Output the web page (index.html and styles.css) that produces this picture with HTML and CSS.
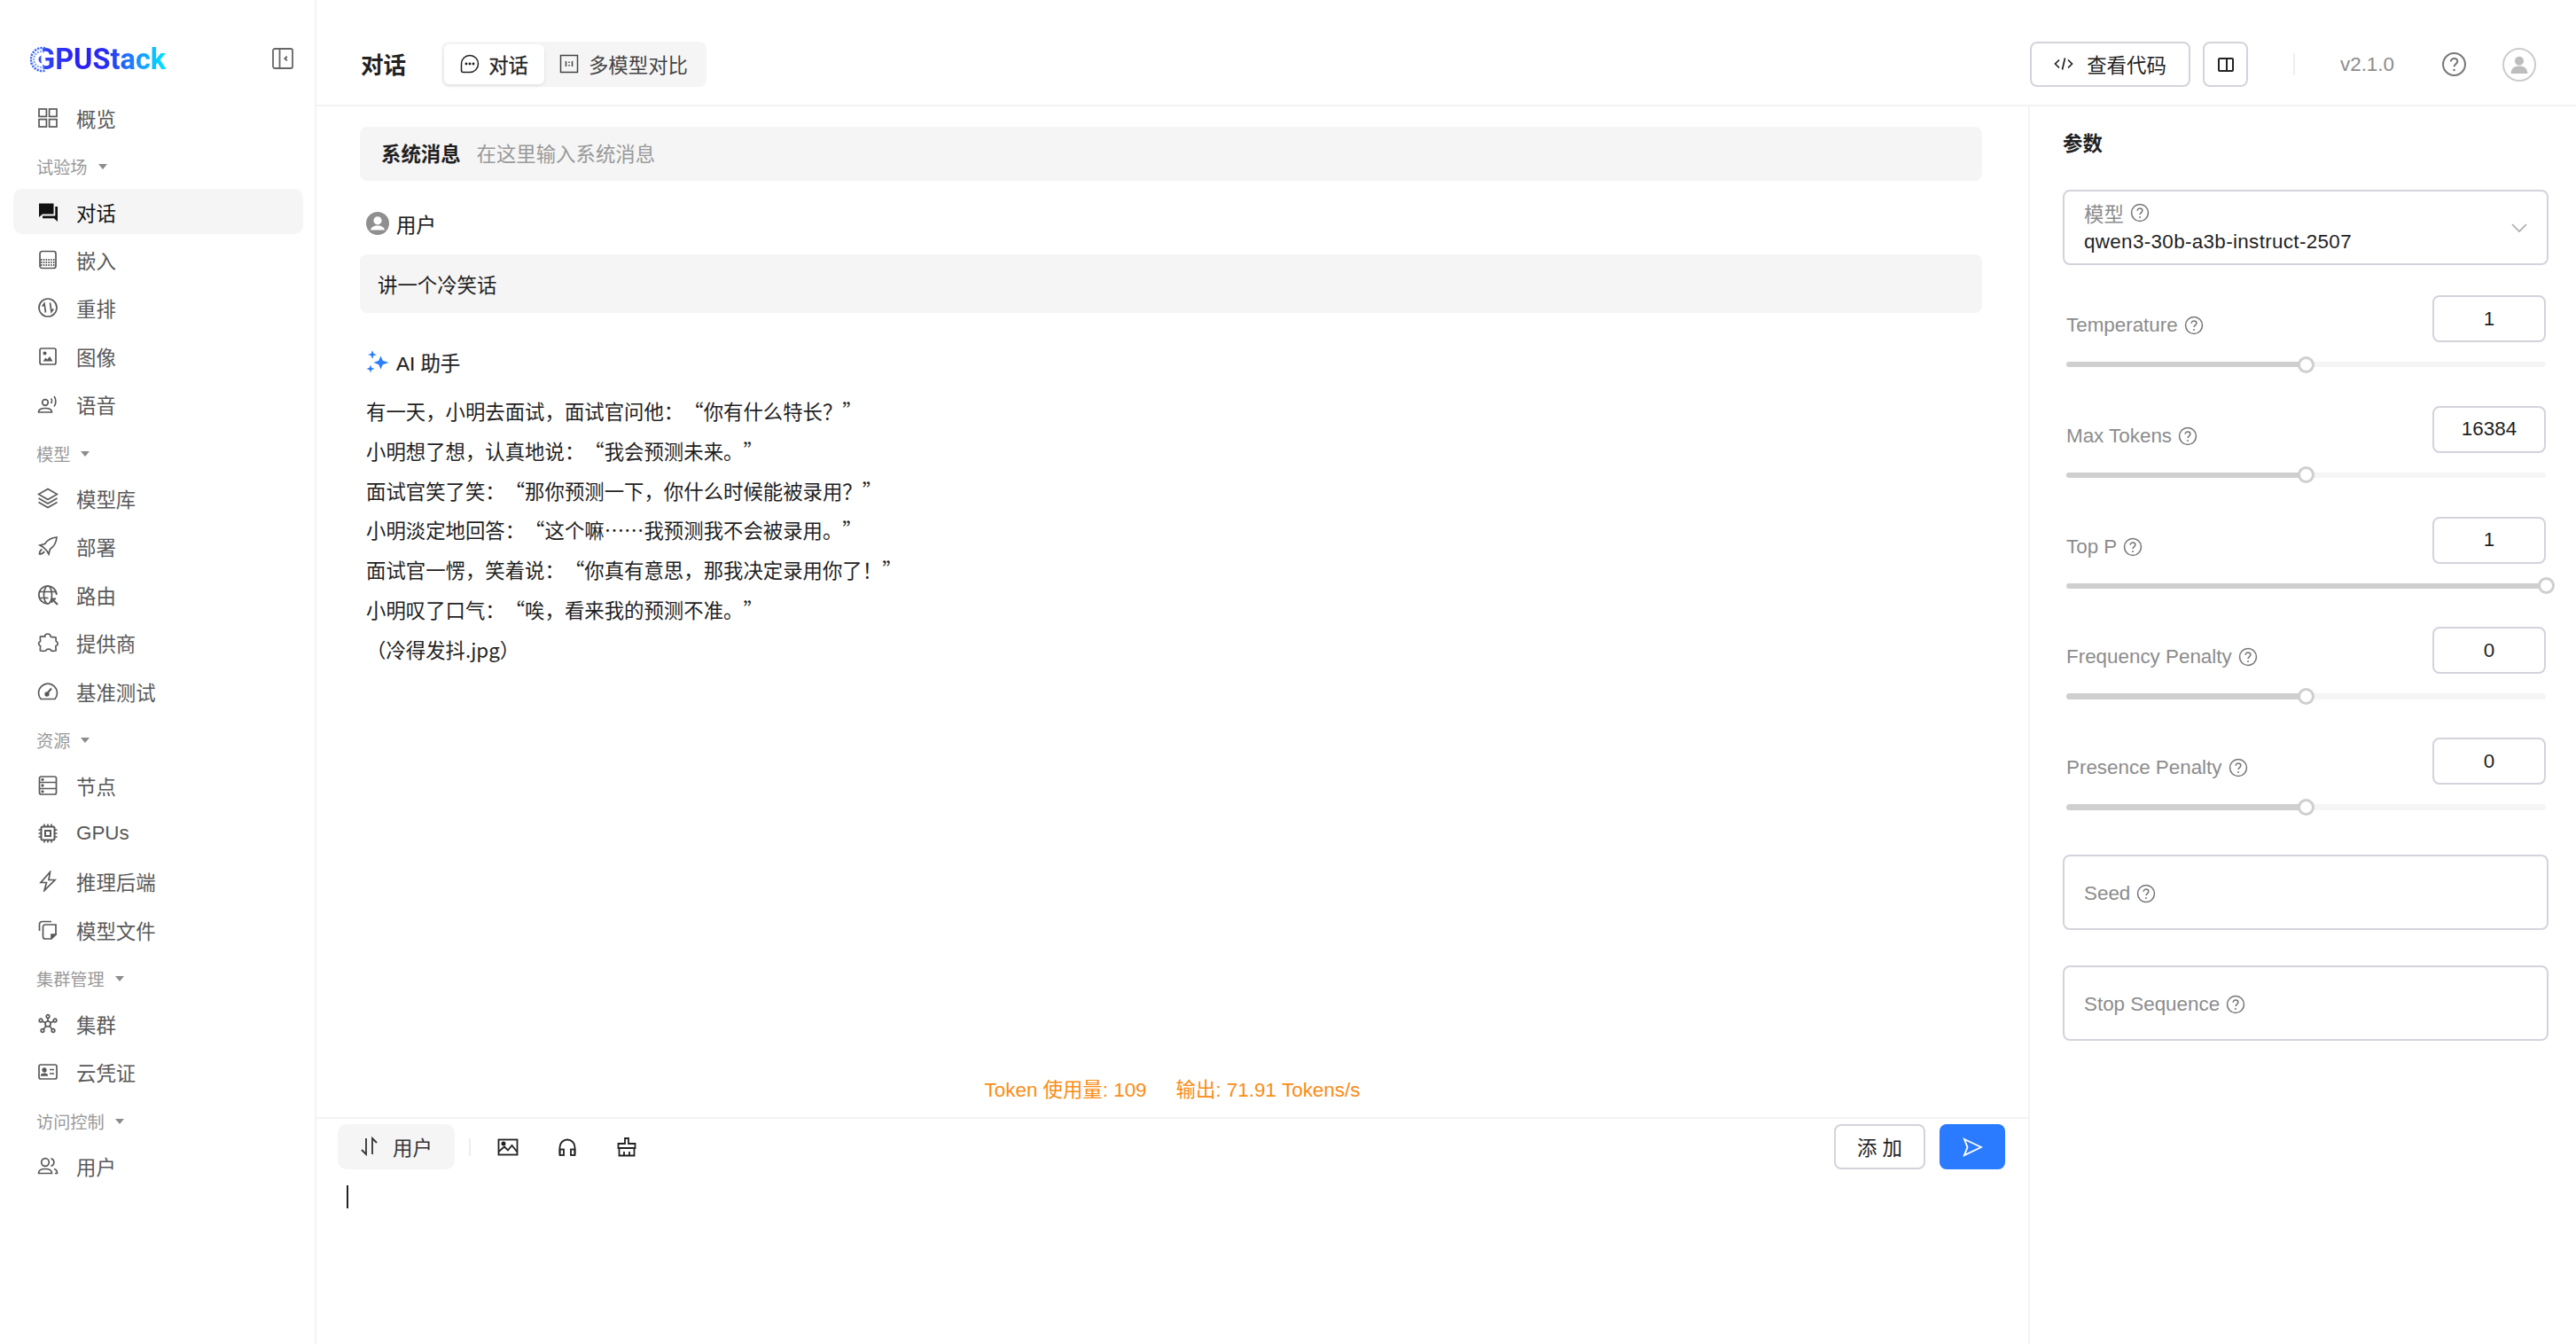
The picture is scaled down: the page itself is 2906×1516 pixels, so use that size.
FILE: index.html
```html
<!DOCTYPE html>
<html lang="zh-CN">
<head>
    <meta charset="UTF-8">
    <title>GPUStack</title>
    <link rel="stylesheet" href="styles.css">
</head>
<body>
    <svg class="sprite" width="0" height="0">
        <symbol id="hint" viewBox="0 0 20 20">
            <circle cx="10" cy="10" r="8.6" fill="none" stroke="currentColor" stroke-width="1.4"/>
            <path d="M7.4 8c0-1.6 1.2-2.5 2.6-2.5s2.6.9 2.6 2.3c0 2-2.6 2.1-2.6 4.1" fill="none" stroke="currentColor" stroke-width="1.4"/>
            <circle cx="10" cy="14.5" r=".9" fill="currentColor"/>
        </symbol>
    </svg>

    <aside class="sidebar">
        <div class="sidebar-head">
            <div class="logo">
                <span class="logo-text">GPUStack</span>
                <svg class="logo-ring" viewBox="0 0 30 30">
                    <path d="M14 5.500A9.500 9.500 0 0 0 14 24.500" fill="none" stroke="#fff" stroke-width="10"/>
                    <path d="M17 2.400A13 13 0 1 0 17 27.600" fill="none" stroke="#3f6bf5" stroke-width="2.600" stroke-dasharray="2.200 1.200"/>
                    <path d="M16 6.500A9 9 0 1 0 16 23.500" fill="none" stroke="#7c9bf9" stroke-width="2.200" stroke-dasharray="1.800 1.400"/>
                </svg>
            </div>
            <svg class="collapse-icon" viewBox="0 0 24 24">
                <rect x="1" y="1" width="22" height="22" rx="2"/>
                <path d="M8.500 1v22"/>
                <path d="M16.800 9.600 14.400 12l2.400 2.400" stroke-width="2"/>
            </svg>
        </div>

        <nav class="nav">
            <a class="nav-item">
                <svg class="nav-icon" viewBox="0 0 24 24"><rect x="2" y="2" width="8.400" height="8.400"/><rect x="13.600" y="2" width="8.400" height="8.400"/><rect x="2" y="13.600" width="8.400" height="8.400"/><rect x="13.600" y="13.600" width="8.400" height="8.400"/></svg>
                概览
            </a>

            <div class="nav-group">试验场<span class="caret"></span></div>
            <a class="nav-item active">
                <svg class="nav-icon solid" viewBox="0 0 24 24"><path d="M2 2.500h16.500v12H6l-4 3.500z"/><path d="M20.300 6H23v17l-4-3.800H6v-2.700h14.300z"/></svg>
                对话
            </a>
            <a class="nav-item">
                <svg class="nav-icon" viewBox="0 0 24 24"><rect x="3" y="2.500" width="18" height="19" rx="2.500"/><path d="M4 12h16M4 15h16M4 18h16" stroke-dasharray="1.500 1.300" stroke-width="2"/></svg>
                嵌入
            </a>
            <a class="nav-item">
                <svg class="nav-icon" viewBox="0 0 24 24"><circle cx="12" cy="12" r="10"/><path d="M9.500 17.500 8 7.500 5.800 10.500M14.500 6.500 16 16.500l2.200-3"/></svg>
                重排
            </a>
            <a class="nav-item">
                <svg class="nav-icon" viewBox="0 0 24 24"><rect x="3" y="3" width="18" height="18" rx="2"/><circle cx="8.500" cy="8.500" r="1.200" fill="currentColor"/><path d="M6.500 17.500l3-4 1.800 2 2.700-3.500 3.500 5.500z" fill="currentColor" stroke-width="0"/></svg>
                图像
            </a>
            <a class="nav-item">
                <svg class="nav-icon" viewBox="0 0 24 24"><circle cx="9" cy="10" r="3.300"/><path d="M1.500 21c0-3 3-4.500 7.500-4.500s7.500 1.500 7.500 4.500z"/><path d="M15.500 5.500c1.300 1.500 1.300 4 0 5.500M19 3c2.500 3 2.500 8.500 0 11.500"/></svg>
                语音
            </a>

            <div class="nav-group">模型<span class="caret"></span></div>
            <a class="nav-item">
                <svg class="nav-icon" viewBox="0 0 24 24"><path d="M12 1.500 22.500 7.500 12 13.500 1.500 7.500z"/><path d="M1.500 12 12 18l10.500-6M1.500 16.500 12 22.500l10.500-6"/></svg>
                模型库
            </a>
            <a class="nav-item">
                <svg class="nav-icon" viewBox="0 0 24 24"><path d="M22 2c-6 .5-10.500 3-13.500 7.500L3 11l3.500 2 4.500 4.500 2 3.500 1.500-5.500C19 12.500 21.500 8 22 2z"/><path d="M5.500 15.500c-2 1-3 3-3 5.500 2.500 0 4.500-1 5.500-3"/></svg>
                部署
            </a>
            <a class="nav-item">
                <svg class="nav-icon" viewBox="0 0 24 24"><path d="M21.800 12a10 10 0 1 0-9.800 10"/><ellipse cx="12" cy="12" rx="4.500" ry="10"/><path d="M2.500 8.500h19M2.500 15.500h10"/><path d="M23 23l-6-6M16.500 21v-4.500H21" stroke-width="2"/></svg>
                路由
            </a>
            <a class="nav-item">
                <svg class="nav-icon" viewBox="0 0 24 24"><path d="M8.500 5c0-4 6.500-4 6.500 0 0 1 4.500.5 6 1 .5 1.500-.5 4 .5 4.500 2.500 1.500 2 4.500-.5 5-.5 1 .5 3.500 0 5.500-2 .5-4 .5-5 0-1.500-2.500-5-2.500-6.500 0-1.500.5-4 .5-6 0-.5-2 .3-4.500 0-5.500-2.500-1-2.500-4 0-5 .3-1-.5-3.500 0-5.500 1.500-.5 5 .2 6 0z"/></svg>
                提供商
            </a>
            <a class="nav-item">
                <svg class="nav-icon" viewBox="0 0 24 24"><path d="M4 20.500a10.500 10.500 0 1 1 16 0z"/><path d="M11 14.500 16 8.500" stroke-width="2"/><circle cx="11" cy="15" r="1.800" fill="currentColor"/></svg>
                基准测试
            </a>

            <div class="nav-group">资源<span class="caret"></span></div>
            <a class="nav-item">
                <svg class="nav-icon" viewBox="0 0 24 24"><rect x="2.500" y="2" width="19" height="20" rx="2"/><path d="M2.500 8.500h19M2.500 15.500h19"/><circle cx="6" cy="5.300" r=".8" fill="currentColor"/><circle cx="6" cy="12" r=".8" fill="currentColor"/><circle cx="6" cy="18.800" r=".8" fill="currentColor"/></svg>
                节点
            </a>
            <a class="nav-item">
                <svg class="nav-icon" viewBox="0 0 24 24"><rect x="4.500" y="4.500" width="15" height="15" rx="1.500" stroke-width="2"/><rect x="9" y="9" width="6" height="6" stroke-width="2"/><path d="M8 1.500v3M12 1.500v3M16 1.500v3M8 19.500v3M12 19.500v3M16 19.500v3M1.500 8h3M1.500 12h3M1.500 16h3M19.500 8h3M19.500 12h3M19.500 16h3"/></svg>
                GPUs
            </a>
            <a class="nav-item">
                <svg class="nav-icon" viewBox="0 0 24 24"><path d="M14.500 1.500 4 13.500h6.500L8 22.500 20 10.500h-7z"/></svg>
                推理后端
            </a>
            <a class="nav-item">
                <svg class="nav-icon" viewBox="0 0 24 24"><path d="M2.500 13V5.500a3 3 0 0 1 3-3H16"/><path d="M9 6h12v11l-5 5H9a2.500 2.500 0 0 1-2.500-2.500v-11A2.500 2.500 0 0 1 9 6z"/><path d="M16 22v-5h6" fill="currentColor"/></svg>
                模型文件
            </a>

            <div class="nav-group">集群管理<span class="caret"></span></div>
            <a class="nav-item">
                <svg class="nav-icon" viewBox="0 0 24 24"><circle cx="12" cy="12" r="3"/><circle cx="12" cy="3.500" r="1.800"/><circle cx="4" cy="8" r="1.800"/><circle cx="20" cy="8" r="1.800"/><circle cx="6" cy="19.500" r="1.800"/><circle cx="18" cy="19.500" r="1.800"/><path d="M12 5.300V9M5.600 8.900 9.400 10.800M18.400 8.900 14.600 10.800M7 18 10.200 14.400M17 18 13.800 14.400"/></svg>
                集群
            </a>
            <a class="nav-item">
                <svg class="nav-icon" viewBox="0 0 24 24"><rect x="2" y="4" width="20" height="16" rx="2"/><circle cx="8" cy="10" r="1.800" fill="currentColor"/><path d="M4.800 16c.3-2.200 6.100-2.200 6.400 0z" fill="currentColor"/><path d="M14 9.500h5M14 14h5"/></svg>
                云凭证
            </a>

            <div class="nav-group">访问控制<span class="caret"></span></div>
            <a class="nav-item">
                <svg class="nav-icon" viewBox="0 0 24 24"><circle cx="9" cy="8" r="4.300"/><path d="M1.500 20.500c0-3.500 3-5 7.500-5s7.500 1.500 7.500 5z"/><path d="M15.500 3.800a4.300 4.300 0 0 1 0 8.400M19 15.500c2 .6 3.500 2.300 3.500 5H20"/></svg>
                用户
            </a>
        </nav>
    </aside>

    <div class="page">
        <header class="topbar">
            <h1 class="page-title">对话</h1>
            <div class="tabs">
                <div class="tab active">
                    <svg class="tab-icon" viewBox="0 0 22 22"><path d="M11 1.500a9.500 9.500 0 0 1 0 19H3.500c-1 0-2-1-2-2V11A9.500 9.500 0 0 1 11 1.500z"/><circle cx="7" cy="11" r=".7" fill="currentColor"/><circle cx="11" cy="11" r=".7" fill="currentColor"/><circle cx="15" cy="11" r=".7" fill="currentColor"/></svg>
                    对话
                </div>
                <div class="tab">
                    <svg class="tab-icon" viewBox="0 0 22 22"><rect x="1.500" y="1.500" width="19" height="19"/><path d="M7.500 8v6M14.500 8v6M11 8.500v1.500M11 12v1.500"/></svg>
                    多模型对比
                </div>
            </div>
            <div class="topbar-right">
                <button class="btn code-btn">
                    <svg class="btn-icon" viewBox="0 0 22 22"><path d="M6 6.500 1.500 11 6 15.500M16 6.500l4.500 4.500-4.500 4.500M12.500 4.500 9.500 17.500"/></svg>
                    查看代码
                </button>
                <button class="btn square-btn">
                    <svg class="btn-icon panel" viewBox="0 0 18 18"><rect x="1" y="2" width="16" height="14" rx="1"/><path d="M10 2v14"/></svg>
                </button>
                <span class="top-divider"></span>
                <span class="version">v2.1.0</span>
                <svg class="top-help"><use href="#hint"/></svg>
                <span class="top-avatar">
                    <svg viewBox="0 0 36 36"><circle cx="18" cy="12.500" r="6.500"/><path d="M6 31c0-8 5-11 12-11s12 3 12 11z"/></svg>
                </span>
            </div>
        </header>

        <div class="content">
            <main class="chat">
                <div class="messages">
                    <div class="system-msg">
                        <strong>系统消息</strong>
                        <span class="placeholder">在这里输入系统消息</span>
                    </div>

                    <div class="role">
                        <svg class="role-icon" viewBox="0 0 26 26"><circle cx="13" cy="13" r="13" fill="#8f8f8f"/><circle cx="13" cy="9.800" r="4.600" fill="#fff"/><path d="M5 20.500c.8-3.600 4-5 8-5s7.200 1.400 8 5z" fill="#fff"/></svg>
                        用户
                    </div>
                    <div class="user-msg">讲一个冷笑话</div>

                    <div class="role ai">
                        <svg class="role-icon" viewBox="0 0 26 26" fill="#2b7fff"><path d="M16.500 6.500 18.800 11.700 25.500 14 18.800 16.300 16.500 21.500 14.200 16.300 8.500 14 14.200 11.700z"/><path d="M7 0 8.300 3.700 12 5 8.300 6.300 7 10 5.700 6.300 2 5 5.700 3.700z"/><path d="M5 16.500 6.200 19.800 9.500 21 6.200 22.200 5 25.500 3.800 22.200.5 21 3.800 19.800z"/></svg>
                        AI 助手
                    </div>
                    <div class="ai-msg">
                        <p>有一天，小明去面试，面试官问他：“你有什么特长？”</p>
                        <p>小明想了想，认真地说：“我会预测未来。”</p>
                        <p>面试官笑了笑：“那你预测一下，你什么时候能被录用？”</p>
                        <p>小明淡定地回答：“这个嘛……我预测我不会被录用。”</p>
                        <p>面试官一愣，笑着说：“你真有意思，那我决定录用你了！”</p>
                        <p>小明叹了口气：“唉，看来我的预测不准。”</p>
                        <p>（冷得发抖.jpg）</p>
                    </div>
                </div>

                <div class="token-line">
                    <span>Token 使用量: 109</span>
                    <span>输出: 71.91 Tokens/s</span>
                </div>

                <div class="composer">
                    <div class="composer-bar">
                        <div class="role-btn">
                            <svg class="role-swap" viewBox="0 0 20 22"><path d="M6 2v18L1 15M13 20V2l5 5"/></svg>
                            用户
                        </div>
                        <span class="bar-divider"></span>
                        <div class="bar-tool">
                            <svg viewBox="0 0 24 24"><rect x="1.500" y="3.500" width="21" height="17"/><circle cx="7" cy="8" r="1.600" fill="currentColor"/><path d="M1.500 17 8 11.500l4 4 4.500-5.500 6 7.500"/></svg>
                        </div>
                        <div class="bar-tool">
                            <svg viewBox="0 0 24 24"><path d="M3.500 20v-8a8.500 8.500 0 0 1 17 0v8"/><rect x="3.500" y="14.500" width="4.500" height="6.500"/><rect x="16" y="14.500" width="4.500" height="6.500"/></svg>
                        </div>
                        <div class="bar-tool">
                            <svg viewBox="0 0 24 24"><path d="M10 2h4v6h7.500v5h-19V8H10z"/><path d="M3.500 13v8.500h17V13M9 21.500V17M15 21.500V17"/></svg>
                        </div>
                        <div class="bar-actions">
                            <button class="btn add-btn">添 加</button>
                            <button class="send-btn">
                                <svg viewBox="0 0 24 24"><path d="M3 3 22 12 3 21l3.500-9z"/></svg>
                            </button>
                        </div>
                    </div>
                    <span class="cursor"></span>
                </div>
            </main>

            <aside class="params">
                <div class="params-title">参数</div>

                <div class="field select-field">
                    <div class="field-body">
                        <div class="field-label">模型 <svg class="hint"><use href="#hint"/></svg></div>
                        <div class="field-value">qwen3-30b-a3b-instruct-2507</div>
                    </div>
                    <svg class="chevron" viewBox="0 0 18 12"><path d="M1 2l8 8 8-8"/></svg>
                </div>

                <div class="param-list">
                    <div class="param-row">
                        <div class="param-head">
                            <span class="param-label">Temperature <svg class="hint"><use href="#hint"/></svg></span>
                            <div class="num-box">1</div>
                        </div>
                        <div class="slider"><div class="slider-fill" style="width: 50%"></div><span class="slider-handle" style="left: 50%"></span></div>
                    </div>
                    <div class="param-row">
                        <div class="param-head">
                            <span class="param-label">Max Tokens <svg class="hint"><use href="#hint"/></svg></span>
                            <div class="num-box">16384</div>
                        </div>
                        <div class="slider"><div class="slider-fill" style="width: 50%"></div><span class="slider-handle" style="left: 50%"></span></div>
                    </div>
                    <div class="param-row">
                        <div class="param-head">
                            <span class="param-label">Top P <svg class="hint"><use href="#hint"/></svg></span>
                            <div class="num-box">1</div>
                        </div>
                        <div class="slider"><div class="slider-fill" style="width: 100%"></div><span class="slider-handle" style="left: 100%"></span></div>
                    </div>
                    <div class="param-row">
                        <div class="param-head">
                            <span class="param-label">Frequency Penalty <svg class="hint"><use href="#hint"/></svg></span>
                            <div class="num-box">0</div>
                        </div>
                        <div class="slider"><div class="slider-fill" style="width: 50%"></div><span class="slider-handle" style="left: 50%"></span></div>
                    </div>
                    <div class="param-row">
                        <div class="param-head">
                            <span class="param-label">Presence Penalty <svg class="hint"><use href="#hint"/></svg></span>
                            <div class="num-box">0</div>
                        </div>
                        <div class="slider"><div class="slider-fill" style="width: 50%"></div><span class="slider-handle" style="left: 50%"></span></div>
                    </div>
                </div>

                <div class="field text-field">
                    <div class="field-label">Seed <svg class="hint"><use href="#hint"/></svg></div>
                </div>
                <div class="field text-field">
                    <div class="field-label">Stop Sequence <svg class="hint"><use href="#hint"/></svg></div>
                </div>
            </aside>
        </div>
    </div>
</body>
</html>
```

FILE: styles.css
```css
* {
    box-sizing: border-box;
}

html, body {
    height: 100%;
}

body {
    margin: 0;
    display: flex;
    overflow: hidden;
    background: #fff;
    color: #1f1f1f;
    font-family: "Liberation Sans", "Noto Sans CJK SC", sans-serif;
    font-size: 22.4px;
}

.sprite {
    position: absolute;
}

/* Sidebar */
.sidebar {
    width: 357px;
    flex-shrink: 0;
    border-right: 2px solid #f3f3f3;
    padding: 0 13px 0 15px;
}

.sidebar-head {
    height: 107px;
    display: flex;
    align-items: flex-start;
    justify-content: space-between;
    padding: 47px 11px 0 19px;
}

.logo {
    position: relative;
    height: 38px;
    margin-top: 1px;
    display: flex;
    align-items: center;
    padding-left: 6px;
}

.logo-text {
    font-family: Roboto, sans-serif;
    font-weight: 700;
    font-size: 32.5px;
    line-height: 38px;
    background: linear-gradient(90deg, #2f50f2 0%, #2b1cf5 35%, #2a2ff0 55%, #1a8dff 78%, #00e8ff 100%);
    -webkit-background-clip: text;
    background-clip: text;
    color: transparent;
}

.logo-ring {
    position: absolute;
    left: 0;
    top: 4px;
    width: 30px;
    height: 30px;
}

.collapse-icon {
    width: 24px;
    height: 24px;
    margin-top: 7px;
    fill: none;
    stroke: #666;
    stroke-width: 1.8;
}

.nav {
    display: flex;
    flex-direction: column;
}

.nav-item {
    height: 51.2px;
    margin-bottom: 3.2px;
    padding-left: 26.5px;
    border-radius: 10px;
    display: flex;
    align-items: center;
    color: #595959;
}

.nav-item.active {
    background: #f5f5f5;
    color: #111;
}

.nav-icon {
    width: 24px;
    height: 24px;
    margin-right: 20.5px;
    flex-shrink: 0;
    fill: none;
    stroke: currentColor;
    stroke-width: 1.7;
}

.nav-icon.solid {
    fill: currentColor;
    stroke: none;
}

.nav-group {
    height: 24px;
    margin: 15px 0 12.6px;
    padding-left: 26px;
    display: flex;
    align-items: center;
    font-size: 19.2px;
    color: #999;
}

.caret {
    margin-left: 12px;
    border-left: 5.5px solid transparent;
    border-right: 5.5px solid transparent;
    border-top: 6.5px solid #8c8c8c;
}

/* Top bar */
.page {
    flex: 1;
    min-width: 0;
    display: flex;
    flex-direction: column;
}

.topbar {
    height: 120px;
    flex-shrink: 0;
    display: flex;
    align-items: center;
    padding: 27px 45px 0 50px;
    border-bottom: 2px solid #f3f3f3;
}

.page-title {
    margin: 0 40px 2px 0;
    font-size: 25.6px;
    font-weight: 700;
    color: #222;
}

.tabs {
    height: 51px;
    padding: 3px;
    display: flex;
    background: #f5f5f5;
    border-radius: 8px;
}

.tab {
    height: 45px;
    padding: 0 18px 2px;
    display: flex;
    align-items: center;
    gap: 10px;
    border-radius: 6px;
    color: #444;
}

.tab:last-child {
    padding: 0 18px 2px 17px;
    gap: 11px;
}

.tab.active {
    background: #fff;
    color: #1f1f1f;
    box-shadow: 0 2px 4px rgba(0, 0, 0, 0.08);
    -webkit-text-stroke: 0.3px #1f1f1f;
}

.tab-icon {
    width: 22px;
    height: 22px;
    fill: none;
    stroke: #444;
    stroke-width: 1.5;
}

.tab.active .tab-icon {
    stroke: #222;
}

.topbar-right {
    margin-left: auto;
    display: flex;
    align-items: center;
}

.btn {
    height: 51px;
    padding: 0 0 1px;
    background: #fff;
    border: 2px solid #d3d3dc;
    border-radius: 8px;
    font: inherit;
    color: #1f1f1f;
    display: flex;
    align-items: center;
    justify-content: center;
}

.btn-icon {
    width: 22px;
    height: 22px;
    fill: none;
    stroke: #222;
    stroke-width: 1.7;
}

.code-btn {
    width: 181px;
    gap: 15px;
}

.square-btn {
    width: 51px;
    margin-left: 14px;
    padding: 0;
}

.btn-icon.panel {
    width: 18px;
    height: 18px;
    stroke-width: 2;
}

.top-divider {
    width: 2px;
    height: 25px;
    margin: 0 51px;
    background: #eee;
}

.version {
    color: #8c8c8c;
    font-size: 22.4px;
}

.top-help {
    width: 29px;
    height: 29px;
    margin-left: 53px;
    color: #777;
}

.top-avatar {
    width: 38px;
    height: 38px;
    margin-left: 40px;
    padding: 3px;
    border: 2px solid #ccc;
    border-radius: 50%;
    overflow: hidden;
}

.top-avatar svg {
    display: block;
    fill: #bdbdbd;
}

/* Chat column */
.content {
    flex: 1;
    min-height: 0;
    display: flex;
}

.chat {
    width: 1931px;
    flex-shrink: 0;
    display: flex;
    flex-direction: column;
}

.messages {
    flex: 1;
    min-height: 0;
    padding: 23px 52px 0 49px;
}

.system-msg {
    height: 61px;
    padding: 0 0 3px 24px;
    display: flex;
    align-items: center;
    gap: 18px;
    background: #f5f5f5;
    border-radius: 8px;
}

.placeholder {
    color: #999;
}

.role {
    height: 32px;
    margin-top: 32px;
    padding-left: 7px;
    display: flex;
    align-items: center;
    gap: 8px;
    -webkit-text-stroke: 0.2px #1f1f1f;
}

.role.ai {
    margin-top: 39px;
}

.role-icon {
    width: 26px;
    height: 26px;
}

.user-msg {
    height: 66px;
    margin-top: 19px;
    padding: 0 0 1px 20px;
    display: flex;
    align-items: center;
    background: #f5f5f5;
    border-radius: 8px;
}

.ai-msg {
    margin-top: 17px;
    padding-left: 7px;
    font-family: "Noto Sans CJK SC", sans-serif;
    line-height: 44.8px;
    text-spacing-trim: space-all;
}

.ai-msg p {
    margin: 0;
}

.token-line {
    height: 32px;
    margin-bottom: 17px;
    display: flex;
    justify-content: center;
    align-items: center;
    gap: 33px;
    color: #fa8c16;
}

.composer {
    height: 256px;
    flex-shrink: 0;
    border-top: 2px solid #f3f3f3;
    padding: 6px 26px 0 24px;
}

.composer-bar {
    display: flex;
    align-items: center;
}

.role-btn {
    width: 132px;
    height: 51px;
    padding: 0 0 2px 26px;
    display: flex;
    align-items: center;
    gap: 16px;
    background: #f5f5f5;
    border-radius: 10px;
    color: #333;
}

.role-swap {
    width: 20px;
    height: 22px;
    fill: none;
    stroke: #333;
    stroke-width: 1.8;
}

.bar-divider {
    width: 2px;
    height: 20px;
    margin: 0 0 0 16px;
    background: #eee;
}

.bar-tool {
    width: 51px;
    height: 51px;
    margin-left: 16px;
    display: flex;
    align-items: center;
    justify-content: center;
}

.bar-tool svg {
    width: 24px;
    height: 24px;
    fill: none;
    stroke: #222;
    stroke-width: 1.8;
}

.bar-actions {
    margin-left: auto;
    display: flex;
    gap: 16px;
}

.add-btn {
    width: 103px;
}

.send-btn {
    width: 74px;
    height: 51px;
    border: none;
    border-radius: 8px;
    background: #2a7bff;
    display: flex;
    align-items: center;
    justify-content: center;
}

.send-btn svg {
    width: 24px;
    height: 24px;
    fill: none;
    stroke: #fff;
    stroke-width: 1.9;
}

.cursor {
    display: block;
    width: 2px;
    height: 26px;
    margin: 18px 0 0 10px;
    background: #222;
}

/* Parameters panel */
.params {
    flex: 1;
    min-width: 0;
    border-left: 2px solid #f3f3f3;
    padding: 27px 31px 0 37px;
}

.params-title {
    height: 32px;
    margin-bottom: 35px;
    line-height: 32px;
    font-weight: 700;
    color: #222;
}

.field {
    border: 2px solid #d3d3dc;
    border-radius: 8px;
    background: #fff;
}

.select-field {
    height: 85px;
    padding: 0 22px 0 22px;
    display: flex;
    align-items: center;
}

.field-body {
    flex: 1;
}

.field-label {
    height: 30px;
    display: flex;
    align-items: center;
    gap: 7px;
    color: #8c8c8c;
}

.field-value {
    height: 30px;
    margin-top: 3px;
    line-height: 30px;
    letter-spacing: 0.35px;
    color: #1f1f1f;
}

.hint {
    width: 22px;
    height: 22px;
    color: #777;
}

.chevron {
    width: 18px;
    height: 12px;
    fill: none;
    stroke: #aaa;
    stroke-width: 1.6;
}

.param-list {
    margin-top: 34px;
}

.param-row {
    height: 124.8px;
    padding: 0 3px 0 4px;
}

.param-head {
    height: 53px;
    display: flex;
    justify-content: space-between;
    align-items: center;
}

.param-label {
    padding-top: 15px;
    display: flex;
    align-items: center;
    gap: 7px;
    color: #8c8c8c;
}

.num-box {
    width: 128px;
    height: 53px;
    border: 2px solid #d3d3dc;
    border-radius: 8px;
    display: flex;
    align-items: center;
    justify-content: center;
}

.slider {
    position: relative;
    height: 6.4px;
    margin-top: 22px;
    background: #f5f5f5;
    border-radius: 4px;
}

.slider-fill {
    height: 100%;
    background: #cfcfcf;
    border-radius: 4px;
}

.slider-handle {
    position: absolute;
    top: 50%;
    width: 19px;
    height: 19px;
    margin: -9.5px 0 0 -9.5px;
    background: #fff;
    border: 3px solid #cfcfcf;
    border-radius: 50%;
}

.text-field {
    height: 85px;
    padding: 3px 0 0 22px;
    margin-bottom: 40px;
    display: flex;
    align-items: center;
}

.param-list + .text-field {
    margin-top: 7px;
}
```
